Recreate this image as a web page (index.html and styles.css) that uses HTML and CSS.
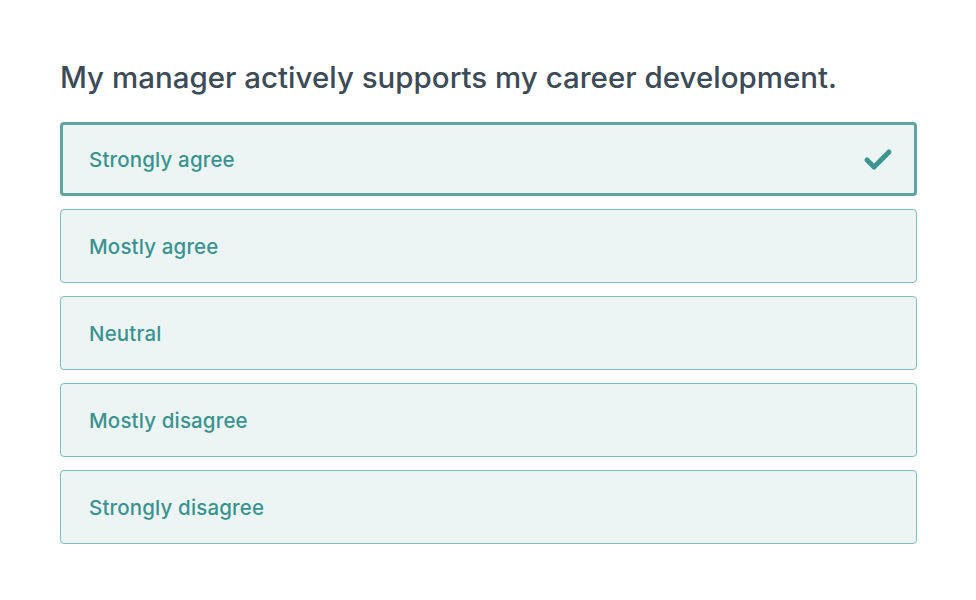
FILE: index.html
```html
<!DOCTYPE html>
<html>
  <head>
    <title>Survey Question</title>
    <meta charset="utf-8">
    <meta name="viewport" content="width=device-width, initial-scale=1">
    <link rel="stylesheet" href="styles.css">
  </head>
  <body>
    <div class="question">
      <h1>My manager actively supports my career development.</h1>
      <ul class="options">
        <li class="option selected">
          <span>Strongly agree</span>
          <svg class="check" width="30" height="24" viewBox="0 0 30 24">
            <path d="M4 13 L11 20 L26 5" fill="none" stroke="#3d9491" stroke-width="5" stroke-linecap="round" stroke-linejoin="round"/>
          </svg>
        </li>
        <li class="option"><span>Mostly agree</span></li>
        <li class="option"><span>Neutral</span></li>
        <li class="option"><span>Mostly disagree</span></li>
        <li class="option"><span>Strongly disagree</span></li>
      </ul>
    </div>
  </body>
</html>
```

FILE: styles.css
```css
body {
  background: white;
  margin: 0;
  font-family: 'Inter', 'Lato', sans-serif;
}

.question {
  padding: 59px 59px 0 60px;
}

.question h1 {
  margin: 0 0 27px 0;
  font-size: 29.5px;
  line-height: 36px;
  font-weight: 500;
  color: #3d4a57;
}

.options {
  list-style: none;
  margin: 0;
  padding: 0;
  display: flex;
  flex-direction: column;
  gap: 13px;
}

.option {
  box-sizing: border-box;
  height: 74px;
  display: flex;
  align-items: center;
  justify-content: space-between;
  padding: 0 28px;
  background: #ecf5f4;
  border: 1px solid #82bcba;
  border-radius: 4px;
  color: #3a9290;
  font-size: 20.5px;
  font-weight: 500;
  letter-spacing: 0.15px;
}

.option.selected {
  border: 3px solid #5fa4a1;
  padding: 0 21px 0 26px;
}
```
